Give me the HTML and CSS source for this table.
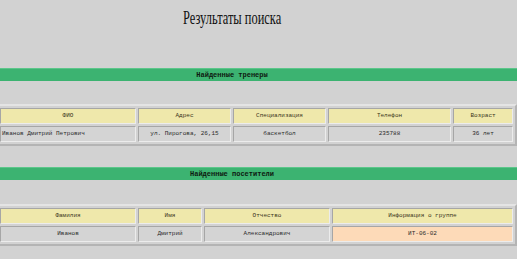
FILE: index.html
```html
<!DOCTYPE html>
<html lang="ru">
<head>
<meta charset="utf-8">
<title>Результаты поиска</title>
<link rel="stylesheet" href="styles.css">
</head>
<body>
<div class="page">
  <div class="title-area">
    <h1 class="title">Результаты поиска</h1>
  </div>

  <div class="bar bar-first">Найденные тренеры</div>
  <table class="grid grid-first">
    <colgroup>
      <col class="c136"><col class="c93"><col class="c93"><col class="c123"><col class="c60">
    </colgroup>
    <tr class="head">
      <td>ФИО</td><td>Адрес</td><td>Специализация</td><td>Телефон</td><td>Возраст</td>
    </tr>
    <tr class="data">
      <td class="left">Иванов Дмитрий Петрович</td><td>ул. Пирогова, 26,15</td><td>баскетбол</td><td>235788</td><td>36 лет</td>
    </tr>
  </table>

  <div class="bar bar-second">Найденные посетители</div>
  <table class="grid grid-second">
    <colgroup>
      <col class="c136"><col class="c64"><col class="c126"><col class="c181">
    </colgroup>
    <tr class="head">
      <td>Фамилия</td><td>Имя</td><td>Отчество</td><td>Информация о группе</td>
    </tr>
    <tr class="data">
      <td>Иванов</td><td>Дмитрий</td><td>Александрович</td><td class="peach">ИТ-06-02</td>
    </tr>
  </table>
</div>
</body>
</html>
```

FILE: styles.css
```css
html, body {
  margin: 0;
  padding: 0;
  background: #d2d2d2;
}

.page {
  width: 517px;
  height: 259px;
  overflow: hidden;
}

.title-area {
  height: 68px;
  padding-right: 53px;
  box-sizing: border-box;
  text-align: center;
}

.title {
  display: inline-block;
  margin: 0;
  padding-top: 8px;
  font-family: "Liberation Serif", "Times New Roman", serif;
  font-weight: normal;
  font-size: 18px;
  line-height: 20px;
  color: #111;
  transform: scaleX(0.69);
}

.bar {
  height: 13px;
  line-height: 13px;
  background: #3cb371;
  border-top: 1px solid #5cc68a;
  box-sizing: border-box;
  padding-right: 53px;
  text-align: center;
  font-family: "Liberation Mono", "Courier New", monospace;
  font-weight: bold;
  font-size: 7px;
  color: #0e1a10;
}

.bar-second {
  margin-top: 21px;
}

.grid {
  margin-left: -4px;
  width: 521px;
  table-layout: fixed;
  border-collapse: separate;
  border-spacing: 2px;
  border: 2px solid;
  border-color: #e4e4e4 #b4b4b4 #b4b4b4 #e4e4e4;
  font-family: "Liberation Mono", "Courier New", monospace;
  font-size: 6px;
  color: #2a2a2a;
}

.grid-first {
  margin-top: 23px;
}

.grid-second {
  margin-top: 24px;
}

.c136 { width: 136px; }
.c93 { width: 93px; }
.c123 { width: 123px; }
.c60 { width: 60px; }
.c64 { width: 64px; }
.c126 { width: 126px; }
.c181 { width: 181px; }

.grid td {
  height: 16px;
  padding: 0 1px;
  box-sizing: border-box;
  line-height: 14px;
  text-align: center;
  white-space: nowrap;
  overflow: hidden;
  border: 1px solid;
  border-color: #a6a6a6 #ececec #ececec #a6a6a6;
}

.head td {
  background: #efe8ab;
  color: #3a3520;
}

.data td {
  background: #d4d4d4;
}

.data td.left {
  text-align: left;
}

.data td.peach {
  background: #fddab8;
}
```
